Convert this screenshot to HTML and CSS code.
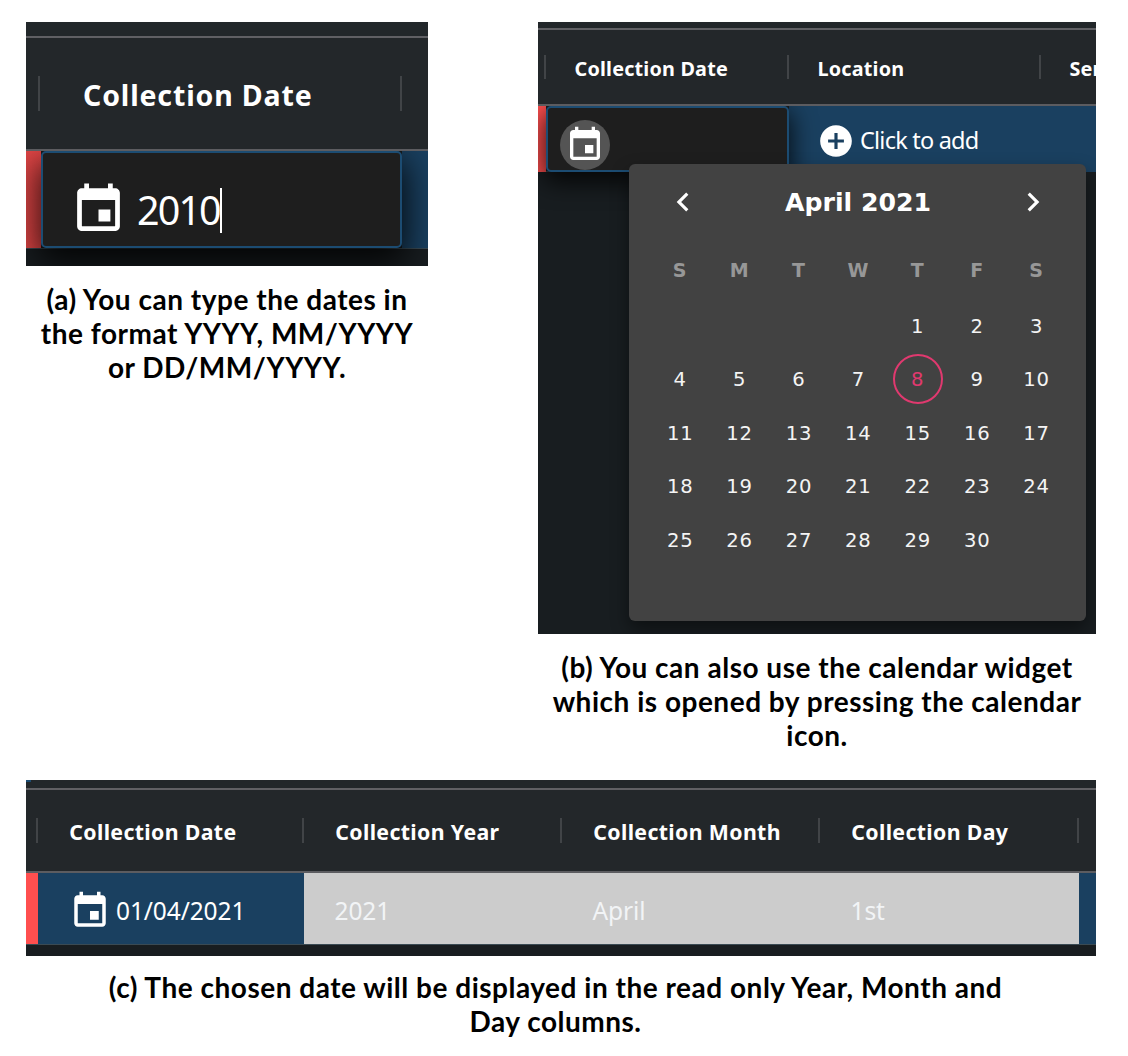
FILE: index.html
```
<!DOCTYPE html>
<html lang="en">
<head>
<meta charset="utf-8">
<title>Collection dates</title>
<link rel="stylesheet" href="styles.css">
</head>
<body>
<svg class="defs" width="0" height="0" aria-hidden="true">
  <symbol id="event" viewBox="0 0 24 24"><path d="M17 12h-5v5h5v-5zM16 1v2H8V1H6v2H5c-1.11 0-1.99.9-1.99 2L3 19c0 1.1.89 2 2 2h14c1.1 0 2-.9 2-2V5c0-1.1-.9-2-2-2h-1V1h-2zm3 18H5V8h14v11z"/></symbol>
  <symbol id="add" viewBox="0 0 24 24"><path d="M12 2C6.48 2 2 6.48 2 12s4.48 10 10 10 10-4.48 10-10S17.52 2 12 2zm5 11h-4v4h-2v-4H7v-2h4V7h2v4h4v2z"/></symbol>
  <symbol id="prev" viewBox="0 0 24 24"><path d="M15.41 7.41 14 6l-6 6 6 6 1.41-1.41L10.83 12z"/></symbol>
  <symbol id="next" viewBox="0 0 24 24"><path d="M10 6 8.59 7.41 13.17 12l-4.58 4.59L10 18l6-6z"/></symbol>
</svg>
<main class="page">
  <figure class="fig fig-type">
    <div class="panel panel-type">
      <div class="toolbar"></div>
      <div class="head">
        <span class="th"></span>
        <span class="th">Collection Date</span>
        <span class="th"></span>
      </div>
      <div class="row">
        <span class="status"></span>
        <div class="editor"><svg class="icon"><use href="#event"/></svg><span class="value">2010</span><i class="caret"></i></div>
        <span class="cell"></span>
      </div>
    </div>
    <figcaption>(a) You can type the dates in<br>the format YYYY, MM/YYYY<br>or DD/MM/YYYY.</figcaption>
  </figure>

  <figure class="fig fig-pick">
    <div class="panel panel-pick">
      <div class="toolbar"></div>
      <div class="head">
        <span class="th"></span>
        <span class="th">Collection Date</span>
        <span class="th">Location</span>
        <span class="th">Ser</span>
      </div>
      <div class="row">
        <span class="status"></span>
        <div class="editor"><span class="halo"><svg class="icon"><use href="#event"/></svg></span></div>
        <div class="cell"><svg class="icon add"><use href="#add"/></svg><span class="value">Click to add</span></div>
      </div>
      <div class="calendar">
        <div class="month"><svg class="arrow"><use href="#prev"/></svg><strong>April 2021</strong><svg class="arrow"><use href="#next"/></svg></div>
        <div class="week names"><span>S</span><span>M</span><span>T</span><span>W</span><span>T</span><span>F</span><span>S</span></div>
        <div class="week"><span></span><span></span><span></span><span></span><span>1</span><span>2</span><span>3</span></div>
        <div class="week"><span>4</span><span>5</span><span>6</span><span>7</span><span class="today">8</span><span>9</span><span>10</span></div>
        <div class="week"><span>11</span><span>12</span><span>13</span><span>14</span><span>15</span><span>16</span><span>17</span></div>
        <div class="week"><span>18</span><span>19</span><span>20</span><span>21</span><span>22</span><span>23</span><span>24</span></div>
        <div class="week"><span>25</span><span>26</span><span>27</span><span>28</span><span>29</span><span>30</span><span></span></div>
      </div>
    </div>
    <figcaption>(b) You can also use the calendar widget<br>which is opened by pressing the calendar<br>icon.</figcaption>
  </figure>

  <figure class="fig fig-result">
    <div class="panel panel-result">
      <div class="toolbar"><i class="tab"></i></div>
      <div class="head">
        <span class="th"></span>
        <span class="th">Collection Date</span>
        <span class="th">Collection Year</span>
        <span class="th">Collection Month</span>
        <span class="th">Collection Day</span>
        <span class="th"></span>
      </div>
      <div class="row">
        <span class="status"></span>
        <div class="cell date"><svg class="icon"><use href="#event"/></svg><span class="value">01/04/2021</span></div>
        <span class="cell locked">2021</span>
        <span class="cell locked">April</span>
        <span class="cell locked">1st</span>
        <span class="cell"></span>
      </div>
    </div>
    <figcaption>(c) The chosen date will be displayed in the read only Year, Month and<br>Day columns.</figcaption>
  </figure>
</main>
</body>
</html>
```
FILE: styles.css
```
* { box-sizing: border-box; }
body { margin: 0; background: #fff; }
.defs { position: absolute; }
.page {
  width: 1128px;
  height: 1056px;
  padding: 22px 32px 0 26px;
  display: grid;
  grid-template-columns: 402px 558px;
  grid-template-rows: 758px 276px;
  column-gap: 110px;
  overflow: hidden;
}
.fig { margin: 0; }
.fig-result { grid-column: 1 / 3; }
figcaption {
  margin-top: 16px;
  font: 700 28px/34px Lato, sans-serif;
  letter-spacing: .51px;
  color: #000;
  text-align: center;
  white-space: nowrap;
}
.fig-result figcaption { margin: 14px 11px 0 0; }

/* Table panels */
.panel {
  position: relative;
  display: flex;
  flex-direction: column;
  overflow: hidden;
  background: #181d20;
  color: #fff;
  font-family: "Noto Sans", sans-serif;
}
.toolbar { flex: none; background: #22272a; }
.head {
  position: relative;
  z-index: 2;
  flex: none;
  display: grid;
  background: #23272a;
  border-top: 2px solid #606064;
  border-bottom: 2px solid #5c5c60;
  font-weight: 700;
}
.th {
  display: flex;
  align-items: center;
  overflow: hidden;
  white-space: nowrap;
  padding-top: 2px;
}
.th:not(:last-child)::after {
  content: "";
  width: 2px;
  height: var(--rule);
  margin: -2px 0 0 auto;
  background: #414447;
}
.row { flex: none; display: grid; border-bottom: 1px solid #3a4a53; }
.status { background: #ff4f4f; }
.cell { display: flex; align-items: center; background: #1a4060; white-space: nowrap; }
.editor {
  position: relative;
  display: flex;
  align-items: center;
  background: #1e1e1e;
  border: 2px solid #1c4c72;
  border-radius: 5px;
}
.icon { flex: none; fill: #fff; }

/* (a) typed date */
.panel-type { height: 244px; --rule: 35px; }
.panel-type .toolbar { height: 14px; }
.panel-type .head { height: 115px; grid-template-columns: 14px 362px 1fr; font-size: 28.5px; letter-spacing: .85px; }
.panel-type .th { padding-top: 3px; }
.panel-type .th::after { margin-top: -4px; }
.panel-type .th:nth-child(2) { padding-left: 43px; }
.panel-type .row { height: 98px; grid-template-columns: 15px 361px 1fr; }
.panel-type .status { background: linear-gradient(90deg, #e64747, #f04a4a); }
.panel-type .editor { padding: 20px 0 0 28px; box-shadow: 0 12px 34px 4px rgba(0,0,0,.85); }
.panel-type .icon { width: 57px; height: 57px; margin-left: -1px; }
.panel-type .value { margin-left: 10px; font-size: 39.5px; letter-spacing: -1.9px; line-height: 50px; }
.caret { width: 2px; height: 45px; margin: 1px 0 0 0; background: #fff; }

/* (b) calendar widget */
.panel-pick { height: 612px; --rule: 24px; }
.panel-pick .toolbar { height: 6px; }
.panel-pick .head { height: 78px; grid-template-columns: 8px 243px 252px 1fr; font-size: 19.8px; letter-spacing: .2px; }
.panel-pick .th { padding-left: 28.5px; }
.panel-pick .th:first-child { padding-left: 0; }
.panel-pick .row { height: 66px; grid-template-columns: 8px 243px 1fr; }
.panel-pick .editor { padding: 12px 0 0 12px; box-shadow: 0 8px 24px 2px rgba(0,0,0,.8); }
.halo {
  flex: none;
  width: 50px;
  height: 50px;
  border-radius: 50%;
  background: #545454;
  display: grid;
  place-items: center;
}
.panel-pick .icon { width: 40px; height: 40px; }
.panel-pick .cell { padding: 4px 0 0 28px; }
.panel-pick .icon.add { width: 38px; height: 38px; }
.panel-pick .value { margin: -3px 0 0 5px; font-size: 23.5px; letter-spacing: -.78px; }
.calendar {
  position: absolute;
  z-index: 3;
  left: 91px;
  top: 142px;
  width: 457px;
  height: 457px;
  padding: 19px 21px 19px 22px;
  background: #424242;
  border-radius: 6px;
  box-shadow: 0 8px 18px rgba(0,0,0,.45);
  font-family: "DejaVu Sans", sans-serif;
}
.month { display: flex; align-items: center; justify-content: space-between; height: 38px; padding: 0 13px; font-size: 25.2px; }
.arrow { width: 38px; height: 38px; fill: #fff; }
.week { display: grid; grid-template-columns: repeat(7, 59.4px); height: 53.6px; margin-left: -.5px; font-size: 19.6px; letter-spacing: .8px; color: #f4f4f4; }
.week span { display: grid; place-items: center; }
.week.names { margin: 22.5px 0 2.3px -1px; color: #979797; font-weight: 700; font-size: 19px; letter-spacing: 0; }
.week .today {
  width: 50px;
  height: 50px;
  margin-top: -1px;
  padding-top: 1px;
  place-self: center;
  border: 2px solid #e0396f;
  border-radius: 50%;
  color: #e0396f;
}

/* (c) read only columns */
.panel-result { height: 176px; --rule: 25px; }
.panel-result .toolbar { height: 8px; }
.tab { display: block; width: 5px; height: 2px; background: #1c4c72; }
.panel-result .head { height: 85px; grid-template-columns: 12px 266px 258px 258px 259px 1fr; font-size: 21.3px; letter-spacing: .35px; }
.panel-result .th { padding-left: 31.3px; }
.panel-result .th:first-child { padding-left: 0; }
.panel-result .row { height: 72px; grid-template-columns: 12px 265.5px 258px 258px 259px 1fr; font-size: 24.5px; letter-spacing: -.1px; }
.panel-result .cell { padding-top: 4px; }
.panel-result .date { padding-left: 31px; }
.panel-result .icon { width: 42px; height: 42px; }
.date .value { margin-left: 5px; }
.panel-result .locked { padding-left: 31px; background: #ccc; color: #f2f4f6; }
```
